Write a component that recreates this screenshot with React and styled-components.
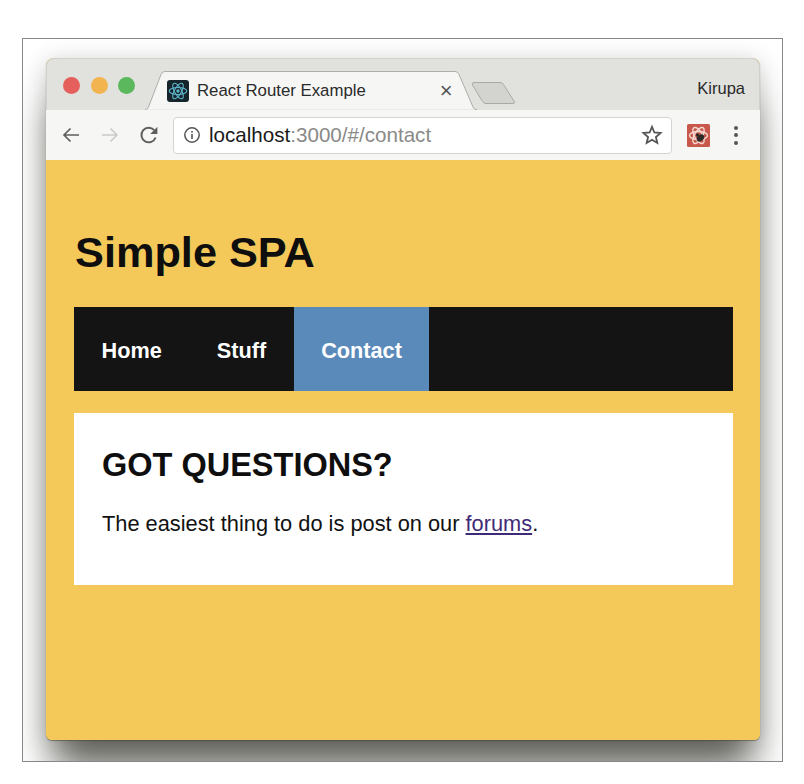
import React from 'react';
import styled, { createGlobalStyle } from 'styled-components';

const GlobalStyle = createGlobalStyle`
	html, body {
		margin: 0;
		padding: 0;
		background: #fff;
	}
	body {
		font-family: 'Liberation Sans', Arial, sans-serif;
	}
`;

const ReactLogo = () => (
	<FaviconBox>
		<svg width="20" height="20" viewBox="0 0 24 24" fill="none" stroke="#5fb6cc" strokeWidth="1.3">
			<ellipse cx="12" cy="12" rx="10.5" ry="4.2" />
			<ellipse cx="12" cy="12" rx="10.5" ry="4.2" transform="rotate(60 12 12)" />
			<ellipse cx="12" cy="12" rx="10.5" ry="4.2" transform="rotate(120 12 12)" />
			<circle cx="12" cy="12" r="2" fill="#5fb6cc" stroke="none" />
		</svg>
	</FaviconBox>
);

const TabShape = () => (
	<TabSvg width="332" height="39" viewBox="0 0 332 39">
		<path
			d="M0 38.5 H0.5 Q2.5 38.5 3.5 36 L16 3.5 Q17 0.5 20 0.5 H310 Q313 0.5 314 3.5 L328 36 Q329 38.5 331 38.5 H332"
			fill="#f6f6f5"
			stroke="#adadaa"
			strokeWidth="1"
		/>
	</TabSvg>
);

const NewTabShape = () => (
	<svg width="46" height="24" viewBox="0 0 46 24">
		<path
			d="M3 1.5 H29 Q31.5 1.5 32.5 3.5 L43 20 Q44.5 22.5 42 22.5 H15 Q12.5 22.5 11.5 20.5 L1.5 4 Q0.5 1.5 3 1.5 Z"
			fill="#d3d4cf"
			stroke="#a9aaa6"
			strokeWidth="1"
		/>
	</svg>
);

const BackIcon = ({ color }) => (
	<svg width="20" height="20" viewBox="0 0 20 20" fill="none" stroke={color} strokeWidth="1.7">
		<path d="M18 10 H3 M9.5 3.5 L3 10 L9.5 16.5" />
	</svg>
);

const ForwardIcon = ({ color }) => (
	<svg width="20" height="20" viewBox="0 0 20 20" fill="none" stroke={color} strokeWidth="1.5">
		<path d="M2 10 H17 M10.5 3.5 L17 10 L10.5 16.5" />
	</svg>
);

const ReloadIcon = () => (
	<svg width="20" height="20" viewBox="0 0 20 20" fill="none">
		<path d="M16.6 12.5 A7.3 7.3 0 1 1 15.2 5.2" stroke="#5f5f5f" strokeWidth="2" />
		<path d="M18.4 1.8 V9 H11.2 Z" fill="#5f5f5f" />
	</svg>
);

const InfoIcon = () => (
	<svg width="18" height="18" viewBox="0 0 18 18" fill="none">
		<circle cx="9" cy="9" r="7.2" stroke="#555" strokeWidth="1.5" />
		<rect x="8.2" y="8" width="1.6" height="5" fill="#555" />
		<rect x="8.2" y="5" width="1.6" height="1.7" fill="#555" />
	</svg>
);

const StarIcon = () => (
	<svg width="22" height="22" viewBox="0 0 22 22" fill="none" stroke="#555" strokeWidth="1.8" strokeLinejoin="miter">
		<path d="M11 2.8 L13.4 8.5 L19.6 9 L14.9 13 L16.3 19 L11 15.8 L5.7 19 L7.1 13 L2.4 9 L8.6 8.5 Z" />
	</svg>
);

const ExtensionIcon = () => (
	<svg width="23" height="23" viewBox="0 0 23 23">
		<rect width="23" height="23" rx="1.5" fill="#c9584c" />
		<g fill="none" stroke="#f4d9d2" strokeWidth="1.4">
			<ellipse cx="11.5" cy="11.5" rx="9" ry="4" />
			<ellipse cx="11.5" cy="11.5" rx="9" ry="4" transform="rotate(60 11.5 11.5)" />
			<ellipse cx="11.5" cy="11.5" rx="9" ry="4" transform="rotate(120 11.5 11.5)" />
		</g>
		<ellipse cx="13.5" cy="14" rx="4.2" ry="3" fill="#2f2a28" transform="rotate(-40 13.5 14)" />
		<circle cx="10.5" cy="11" r="1.7" fill="#2f2a28" />
	</svg>
);

const App = () => (
	<>
		<GlobalStyle />
		<Page>
			<Frame>
				<BrowserWindow>
					<TabStrip>
						<Lights>
							<Light color="#e5605c" />
							<Light color="#f2b44f" />
							<Light color="#5cb85c" />
						</Lights>
						<Tab>
							<TabShape />
							<ReactLogo />
							<TabTitle>React Router Example</TabTitle>
							<TabClose>×</TabClose>
						</Tab>
						<NewTab>
							<NewTabShape />
						</NewTab>
						<Profile>Kirupa</Profile>
					</TabStrip>
					<Toolbar>
						<NavIcons>
							<BackIcon color="#5f5f5f" />
							<ForwardIcon color="#c9c9c9" />
							<ReloadIcon />
						</NavIcons>
						<AddressBar>
							<InfoIcon />
							<Url>
								<b>localhost</b>:3000/#/contact
							</Url>
							<StarIcon />
						</AddressBar>
						<ExtensionIcon />
						<Kebab>
							<i />
							<i />
							<i />
						</Kebab>
					</Toolbar>
					<Viewport>
						<Title>Simple SPA</Title>
						<Nav>
							<NavItem>Home</NavItem>
							<NavItem>Stuff</NavItem>
							<NavItem $active>Contact</NavItem>
						</Nav>
						<Panel>
							<PanelTitle>GOT QUESTIONS?</PanelTitle>
							<PanelText>
								The easiest thing to do is post on our <ForumLink href="#">forums</ForumLink>.
							</PanelText>
						</Panel>
					</Viewport>
				</BrowserWindow>
			</Frame>
		</Page>
	</>
);

const Page = styled.div`
	width: 804px;
	height: 784px;
	padding: 38px 0 0 22px;
	box-sizing: border-box;
	overflow: hidden;
`;

const Frame = styled.div`
	width: 761px;
	height: 724px;
	box-sizing: border-box;
	border: 1px solid #888;
	padding: 19px 0 0 23px;
	overflow: hidden;
	background: #fff;
`;

const BrowserWindow = styled.div`
	width: 714px;
	height: 682px;
	border-radius: 8px 8px 6px 6px;
	background: #f4c95a;
	display: flex;
	flex-direction: column;
	box-shadow: 0 1px 1px rgba(60, 60, 50, 0.5), 0 38px 36px -8px rgba(50, 50, 42, 0.72), 0 4px 24px rgba(40, 40, 35, 0.24);
`;

const TabStrip = styled.div`
	height: 52px;
	flex: none;
	display: flex;
	align-items: flex-end;
	background: #e1e1de;
	border: 1px solid #d0d0cd;
	border-bottom: 0;
	border-radius: 8px 8px 0 0;
	box-sizing: border-box;
`;

const Lights = styled.div`
	display: flex;
	gap: 10.5px;
	align-self: flex-start;
	padding: 18px 0 0 16px;
	width: 85px;
	box-sizing: border-box;
`;

const Light = styled.span`
	flex: none;
	width: 17px;
	height: 17px;
	border-radius: 50%;
	background: ${(p) => p.color};
`;

const Tab = styled.div`
	position: relative;
	flex: none;
	width: 332px;
	height: 39px;
	margin-left: 13px;
	display: flex;
	align-items: center;
	padding: 0 0 0 22px;
	box-sizing: border-box;
`;

const TabSvg = styled.svg`
	position: absolute;
	left: 0;
	top: 0;
`;

const FaviconBox = styled.span`
	position: relative;
	flex: none;
	width: 22px;
	height: 22px;
	border-radius: 3px;
	background: #16242c;
	display: flex;
	align-items: center;
	justify-content: center;
`;

const TabTitle = styled.span`
	position: relative;
	margin-left: 8px;
	font-size: 16.8px;
	color: #2a2a2a;
	white-space: nowrap;
`;

const TabClose = styled.span`
	position: relative;
	margin-left: 74px;
	font-size: 22px;
	line-height: 20px;
	color: #555;
`;

const NewTab = styled.div`
	margin: 0 0 5px -6px;
	height: 24px;
	display: flex;
`;

const Profile = styled.span`
	margin-left: auto;
	align-self: flex-start;
	padding: 20px 14px 0 0;
	font-size: 16.5px;
	color: #2a2a2a;
`;

const Toolbar = styled.div`
	height: 50px;
	flex: none;
	display: flex;
	align-items: center;
	background: #f6f6f5;
	box-sizing: border-box;
	padding: 0 14px 0 15px;
`;

const NavIcons = styled.div`
	display: flex;
	align-items: center;
	gap: 19px;
`;

const AddressBar = styled.div`
	flex: none;
	width: 499px;
	height: 37px;
	margin: 0 15px 0 14px;
	padding: 0 8px 0 9px;
	box-sizing: border-box;
	display: flex;
	align-items: center;
	background: #fff;
	border: 1px solid #d4d4d2;
	border-radius: 4px;
`;

const Url = styled.span`
	flex: 1;
	margin-left: 8px;
	font-size: 20.6px;
	color: #8a8a88;
	white-space: nowrap;

	b {
		font-weight: 400;
		color: #1a1a1a;
	}
`;

const Kebab = styled.span`
	margin-left: auto;
	display: flex;
	flex-direction: column;
	gap: 3.5px;
	padding-right: 8px;

	i {
		width: 4px;
		height: 4px;
		border-radius: 50%;
		background: #555;
	}
`;

const Viewport = styled.main`
	flex: 1;
	padding: 0 27px 0 28px;
	background: #f4c95a;
	border-radius: 0 0 6px 6px;
`;

const Title = styled.h1`
	margin: 63px 0 0 1px;
	height: 84px;
	font-size: 43.3px;
	line-height: 58px;
	font-weight: 700;
	color: #0e0e0e;
`;

const Nav = styled.nav`
	height: 84px;
	display: flex;
	background: #141414;
`;

const NavItem = styled.a`
	display: flex;
	align-items: center;
	padding: 4px 27.5px 0;
	font-size: 21.7px;
	font-weight: 700;
	color: #fff;
	background: ${(p) => (p.$active ? '#5a8aba' : 'transparent')};
`;

const Panel = styled.section`
	margin-top: 22px;
	height: 172px;
	box-sizing: border-box;
	padding: 33px 28px 0;
	background: #fff;
`;

const PanelTitle = styled.h2`
	margin: 0;
	font-size: 32.5px;
	line-height: 38px;
	font-weight: 700;
	color: #0e0e0e;
`;

const PanelText = styled.p`
	margin: 26px 0 0;
	font-size: 21.8px;
	line-height: 28px;
	color: #111;
`;

const ForumLink = styled.a`
	color: #3f2a78;
	text-decoration: underline;
`;

export default App;
